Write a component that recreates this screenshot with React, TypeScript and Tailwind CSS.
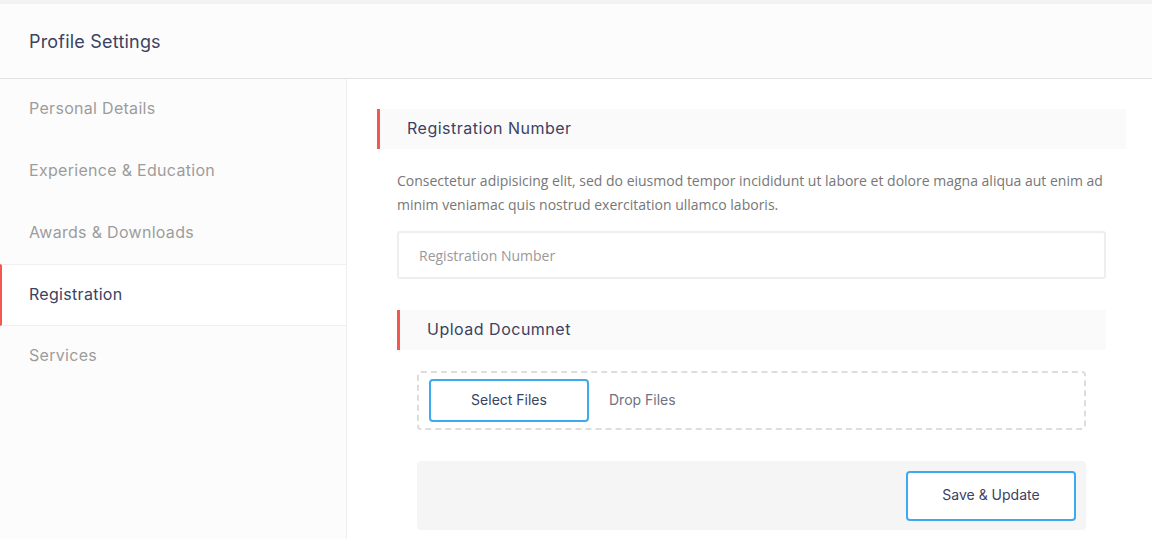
import React from "react"

const nav = ["Personal Details", "Experience & Education", "Awards & Downloads", "Registration", "Services"]

function SectionTitle({ children }: { children: React.ReactNode }) {
  return (
    <div className="flex h-10 items-center border-l-[3px] border-[#f4574f] bg-[#fafafa] pb-[2px] pl-[27px] text-[16px] tracking-[0.5px] text-[#3b4262]">
      {children}
    </div>
  )
}

export default function App() {
  const active = "Registration"
  return (
    <div className="min-h-[539px] bg-white font-['Inter','Noto_Sans',sans-serif]">
      <div className="h-1 bg-[#f2f2f2]" />
      <div className="flex h-[75px] items-center border-b border-[#e2e2e2] bg-[#fcfcfc] px-[29px] text-[18px] tracking-[0.2px] text-[#3b4262]">
        Profile Settings
      </div>
      <div className="flex min-h-[460px]">
        <aside className="w-[347px] shrink-0 border-r border-[#efefef] bg-[#fcfcfc]">
          {nav.map(item =>
            item === active ? (
              <div key={item} className="-mt-px flex h-[62px] items-center border-y border-l-2 border-y-[#efefef] border-l-[#f4574f] bg-white pb-[2px] pl-[27px] text-[16px] tracking-[0.3px] text-[#3b4262]">
                {item}
              </div>
            ) : (
              <div key={item} className="flex h-[62px] items-center pb-1 pl-[29px] text-[16px] tracking-[0.3px] text-[#9c9c9c]">
                {item}
              </div>
            )
          )}
        </aside>
        <main className="flex-1 pl-[30px] pr-[26px] pt-[30px]">
          <SectionTitle>Registration Number</SectionTitle>
          <div className="px-5">
            <p className="mt-[20px] font-['Open_Sans',sans-serif] text-[14px] leading-6 text-[#777]">
              Consectetur adipisicing elit, sed do eiusmod tempor incididunt ut labore et dolore magna aliqua aut enim ad minim veniamac quis nostrud exercitation ullamco laboris.
            </p>
            <input
              placeholder="Registration Number"
              className="mt-[14px] h-12 w-full rounded-[3px] border-2 border-[#eeeeee] px-5 font-['Open_Sans',sans-serif] text-[14px] text-[#777] outline-none placeholder:text-[#999]"
            />
            <div className="mt-[31px]">
              <SectionTitle>Upload Documnet</SectionTitle>
            </div>
            <div className="px-5">
              <div className="mt-[21px] flex h-[59px] items-center gap-5 rounded-[4px] border-2 border-dashed border-[#dddddd] px-[10px]">
                <button className="h-[43px] w-[160px] rounded-[4px] border-2 border-[#3fa9ef] bg-white pb-[2px] text-[14px] text-[#3b4262]">
                  Select Files
                </button>
                <span className="pb-[3px] text-[14px] text-[#6f7280]">Drop Files</span>
              </div>
              <div className="mt-[31px] flex h-[69px] items-center justify-end rounded-[4px] bg-[#f5f5f5] px-[10px]">
                <button className="h-[50px] w-[170px] rounded-[4px] border-2 border-[#3fa9ef] bg-white pb-[2px] text-[14px] text-[#3b4262]">
                  Save &amp; Update
                </button>
              </div>
            </div>
          </div>
        </main>
      </div>
    </div>
  )
}
